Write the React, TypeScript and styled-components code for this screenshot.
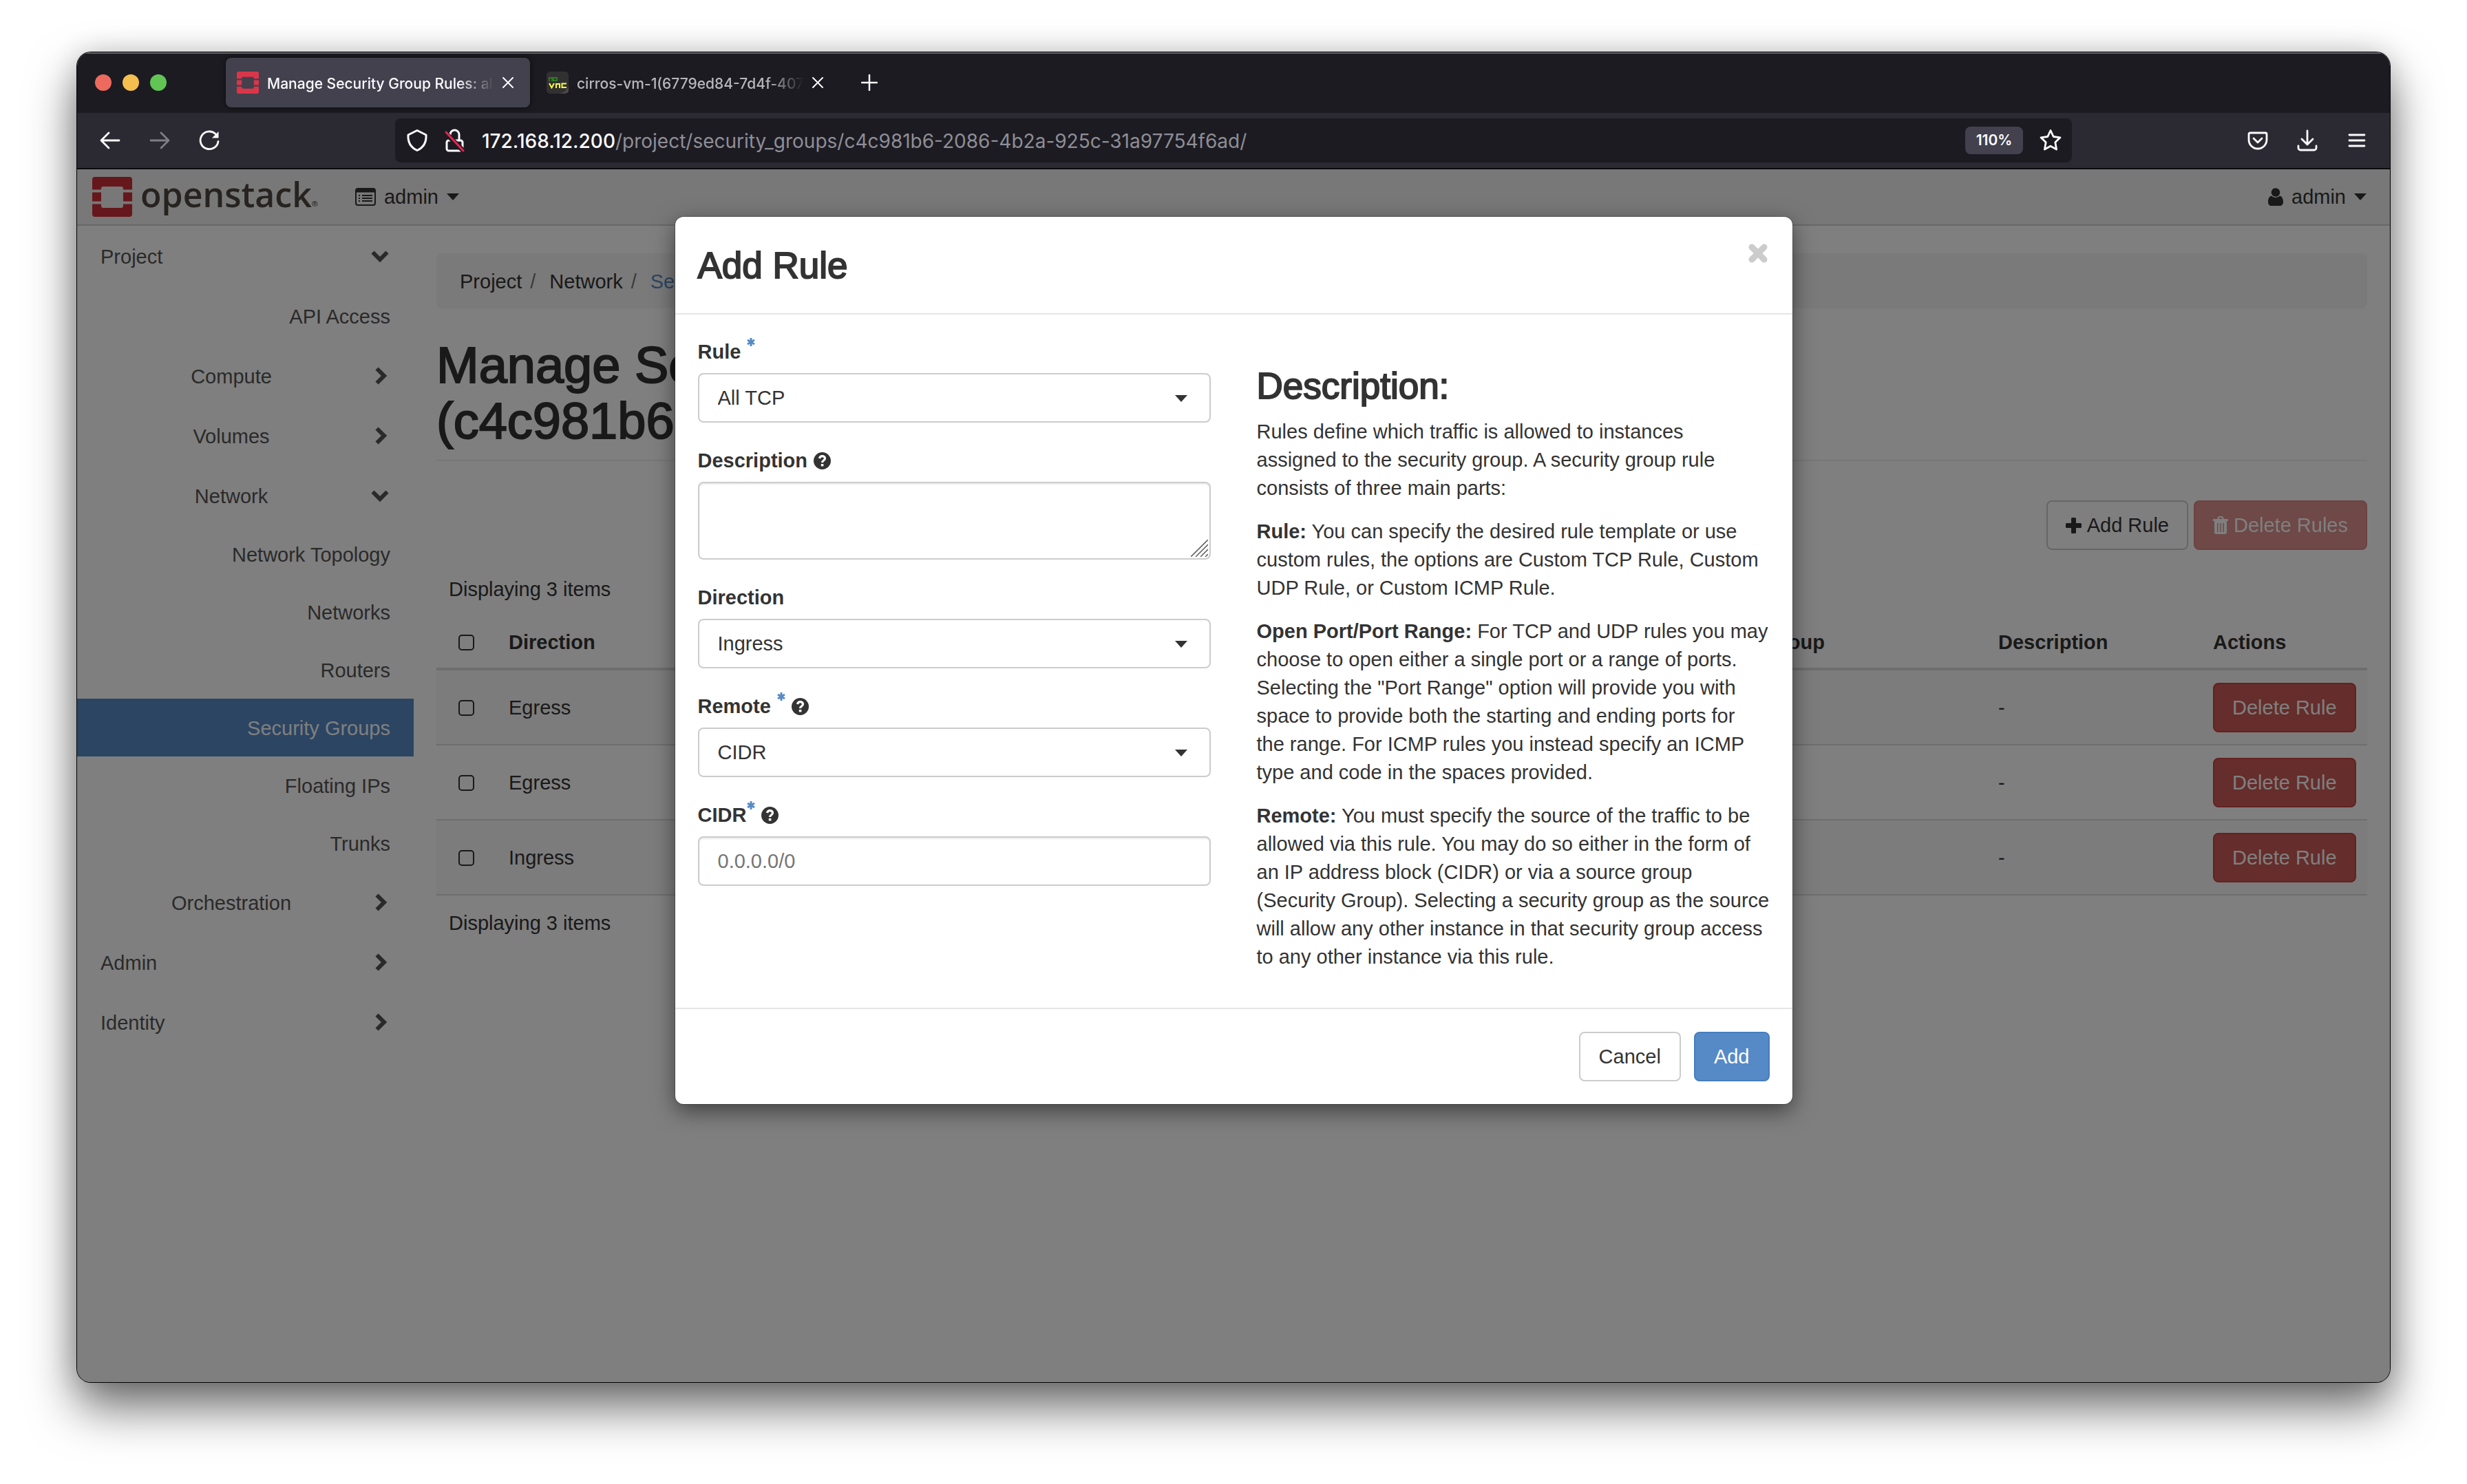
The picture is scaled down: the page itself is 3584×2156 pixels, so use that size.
import React from 'react';
import styled, { createGlobalStyle } from 'styled-components';

const sans = '"Liberation Sans", Arial, sans-serif';
const chromeFont = 'Inter, Roboto, sans-serif';

const GlobalStyle = createGlobalStyle`
  *, *::before, *::after { box-sizing: border-box; }
  body { margin: 0; background: #fff; }
  button, input, select, textarea { font: inherit; color: inherit; margin: 0; }
  button { cursor: pointer; }
  a { text-decoration: none; color: inherit; }
  svg { display: block; flex: none; }
`;

/* ---------- desktop and browser window ---------- */

const Desktop = styled.div`
  min-height: 100vh;
  padding: 76px 112px 148px;
  display: flex;
  flex-direction: column;
  font: 29px/41px ${sans};
  color: #333;
`;

const Window = styled.div`
  flex: 1;
  display: flex;
  flex-direction: column;
  border-radius: 20px;
  overflow: hidden;
  background: #fff;
  box-shadow: 0 0 0 1px #000, 0 36px 70px rgba(0, 0, 0, 0.58), 0 0 40px rgba(0, 0, 0, 0.16);
`;

const TabStrip = styled.div`
  display: flex;
  align-items: center;
  height: 88px;
  padding-left: 26px;
  background: #1c1b22;
  box-shadow: inset 0 2px 0 #66666a;
`;

const Lights = styled.div`
  display: flex;
  gap: 16px;
  width: 190px;
`;

const Light = styled.span<{ $color: string }>`
  width: 24px;
  height: 24px;
  border-radius: 50%;
  background: ${(p) => p.$color};
`;

const Tab = styled.div<{ $active?: boolean }>`
  display: flex;
  align-items: center;
  width: 442px;
  height: 72px;
  margin-right: 8px;
  padding: 0 24px 0 16px;
  gap: 12px;
  border-radius: 8px;
  font: 500 21px/28px ${chromeFont};
  color: ${(p) => (p.$active ? '#fbfbfe' : '#b8b8bc')};
  background: ${(p) => (p.$active ? '#42414d' : 'transparent')};
  box-shadow: ${(p) => (p.$active ? '0 0 8px rgba(0, 0, 0, 0.6)' : 'none')};
`;

const TabTitle = styled.span`
  flex: 1;
  min-width: 0;
  padding-top: 3px;
  overflow: hidden;
  white-space: nowrap;
  mask-image: linear-gradient(to right, #000 84%, transparent 100%);
`;

const ChromeButton = styled.button<{ $dim?: boolean }>`
  display: flex;
  align-items: center;
  justify-content: center;
  padding: 0;
  border: 0;
  background: none;
  color: #fbfbfe;
  opacity: ${(p) => (p.$dim ? 0.4 : 1)};
`;

const NewTab = styled(ChromeButton)`
  margin-left: 11px;
  width: 48px;
  height: 48px;
`;

const Toolbar = styled.div`
  display: flex;
  align-items: center;
  height: 82px;
  padding: 0 32px;
  background: #2b2a33;
  border-bottom: 2px solid #0c0c0d;
`;

const NavButtons = styled.div`
  display: flex;
  gap: 40px;
  width: 430px;
`;

const UrlBar = styled.div`
  flex: 1;
  display: flex;
  align-items: center;
  height: 64px;
  padding: 0 14px 0 16px;
  gap: 23px;
  border-radius: 8px;
  background: #1c1b22;
`;

const Url = styled.div`
  flex: 1;
  padding-top: 2px;
  font: 400 28px/40px ${chromeFont};
  color: #8f8e96;
  b { font-weight: 500; color: #fbfbfe; }
`;

const ZoomPill = styled.button`
  width: 84px;
  height: 40px;
  padding: 0;
  border: 0;
  border-radius: 8px;
  background: #42414d;
  font: 600 21px/40px ${chromeFont};
  color: #fbfbfe;
`;

const ToolIcons = styled.div`
  display: flex;
  justify-content: flex-end;
  gap: 40px;
  width: 430px;
`;

/* ---------- dashboard page ---------- */

const Page = styled.div`
  position: relative;
  flex: 1;
  display: flex;
  flex-direction: column;
`;

const TopBar = styled.header`
  display: flex;
  align-items: center;
  height: 82px;
  padding: 0 34px 0 22px;
  background: #f0f0f0;
  border-bottom: 2px solid #d0d0d0;
`;

const Brand = styled.a`
  display: flex;
  align-items: center;
  gap: 12px;
  margin-right: 54px;
`;

const Wordmark = styled.span`
  display: flex;
  align-items: flex-end;
  padding-bottom: 8px;
  font: 600 50px/56px "Open Sans", "Noto Sans", sans-serif;
  color: #4e4640;
  small { font-size: 11px; line-height: 28px; }
`;

const Menu = styled.button`
  display: flex;
  align-items: center;
  gap: 12px;
  padding: 0;
  border: 0;
  background: none;
`;

const Spacer = styled.div`
  flex: 1;
`;

const Body = styled.div`
  flex: 1;
  display: flex;
`;

const Sidebar = styled.nav`
  width: 489px;
  color: #555;
`;

const NavGroup = styled.button<{ $nested?: boolean }>`
  display: flex;
  align-items: center;
  gap: 13px;
  width: 100%;
  height: 87px;
  padding: 0 36px 0 34px;
  border: 0;
  background: none;
  span { flex: 1; padding-top: 3px; text-align: ${(p) => (p.$nested ? 'center' : 'left')}; }
`;

const NavLeaf = styled.a<{ $active?: boolean; $tall?: boolean }>`
  display: flex;
  align-items: center;
  justify-content: flex-end;
  height: ${(p) => (p.$tall ? 87 : 84)}px;
  padding: 3px 34px 0;
  color: ${(p) => (p.$active ? '#fff' : 'inherit')};
  background: ${(p) => (p.$active ? '#568ac6' : 'transparent')};
`;

const Main = styled.main`
  flex: 1;
  min-width: 0;
  padding: 40px 33px;
`;

const Breadcrumb = styled.ol`
  display: flex;
  align-items: center;
  height: 80px;
  margin: 0;
  padding: 3px 34px 0;
  list-style: none;
  border-radius: 8px;
  background: #f5f5f5;
  li + li::before { content: "/"; padding: 0 20px 0 12px; color: #777; }
  a { color: #568ac6; }
`;

const PageTitle = styled.h1`
  margin: 0;
  padding: 42px 0 16px;
  font-size: 74px;
  line-height: 81px;
  font-weight: 400;
  -webkit-text-stroke: 2px currentColor;
  border-bottom: 2px solid #eee;
`;

const Actions = styled.div`
  display: flex;
  justify-content: flex-end;
  gap: 8px;
  padding: 57px 0 37px;
`;

const Button = styled.button<{ $kind?: 'primary' | 'danger' }>`
  display: inline-flex;
  align-items: center;
  justify-content: center;
  gap: 8px;
  height: 72px;
  padding: 0 26px;
  border: 2px solid ${(p) => (p.$kind === 'primary' ? '#467ebf' : p.$kind === 'danger' ? '#c64440' : '#ccc')};
  border-radius: 8px;
  white-space: nowrap;
  color: ${(p) => (p.$kind ? '#fff' : '#333')};
  background: ${(p) => (p.$kind === 'primary' ? '#568ac6' : p.$kind === 'danger' ? '#ca5a56' : '#fff')};
  &:disabled { opacity: 0.65; }
`;

const Count = styled.p`
  margin: 0;
  padding: 0 18px;
`;

const Rules = styled.table`
  width: 100%;
  margin: 20px 0;
  border-collapse: separate;
  border-spacing: 0;
  table-layout: fixed;
  th { height: 77px; padding: 0 18px; text-align: left; border-bottom: 4px solid #ddd; white-space: nowrap; }
  td { padding: 18px 18px 17px; border-bottom: 2px solid #ddd; white-space: nowrap; }
  tbody tr:nth-child(odd) { background: #f9f9f9; }
`;

const Col = styled.col<{ $width?: number }>`
  width: ${(p) => (p.$width ? `${p.$width}px` : 'auto')};
`;

const Check = styled.input`
  appearance: none;
  display: block;
  width: 23px;
  height: 23px;
  margin: 0 0 0 14px;
  border: 2px solid #333;
  border-radius: 5px;
`;

/* ---------- modal ---------- */

const Backdrop = styled.div`
  position: absolute;
  inset: 0;
  display: flex;
  justify-content: center;
  align-items: flex-start;
  padding-top: 69px;
  background: rgba(0, 0, 0, 0.5);
`;

const Dialog = styled.section`
  width: 1623px;
  border-radius: 12px;
  background: #fff;
  box-shadow: 0 10px 32px rgba(0, 0, 0, 0.5), 0 0 0 1px rgba(0, 0, 0, 0.2);
`;

const DialogHeader = styled.header`
  display: flex;
  justify-content: space-between;
  align-items: center;
  height: 142px;
  padding: 0 35px 0 33px;
  border-bottom: 2px solid #e5e5e5;
`;

const Heading = styled.h3`
  margin: 0;
  font-size: 53px;
  line-height: 57px;
  font-weight: 400;
  -webkit-text-stroke: 2px currentColor;
`;

const Close = styled.button`
  align-self: flex-start;
  margin-top: 38px;
  padding: 0;
  border: 0;
  background: none;
`;

const DialogBody = styled.div`
  display: grid;
  grid-template-columns: 1fr 1fr;
  gap: 67px;
  padding: 34px 33px 31px;
`;

const Field = styled.div`
  margin-bottom: 35px;
`;

const Label = styled.label`
  display: flex;
  gap: 9px;
  margin-bottom: 10px;
  font-weight: 700;
  svg { align-self: center; }
`;

const Star = styled.span`
  display: flex;
  align-items: flex-start;
  gap: 1px;
  svg { align-self: flex-start; }
`;

const Control = styled.div`
  position: relative;
  display: flex;
`;

const Corner = styled.span<{ $right: number; $bottom: number }>`
  position: absolute;
  right: ${(p) => p.$right}px;
  bottom: ${(p) => p.$bottom}px;
  pointer-events: none;
`;

const Select = styled.select`
  appearance: none;
  width: 100%;
  height: 72px;
  padding: 0 27px;
  border: 2px solid #ccc;
  border-radius: 8px;
  background: #fff;
`;

const TextInput = styled.input`
  width: 100%;
  height: 72px;
  padding: 0 27px;
  border: 2px solid #ccc;
  border-radius: 8px;
  background: #fff;
  box-shadow: inset 0 2px 2px rgba(0, 0, 0, 0.08);
  &::placeholder { color: #757575; opacity: 1; }
`;

const TextArea = styled.textarea`
  width: 100%;
  height: 113px;
  padding: 12px 27px;
  border: 2px solid #ccc;
  border-radius: 8px;
  resize: none;
  background: #fff;
  box-shadow: inset 0 2px 2px rgba(0, 0, 0, 0.08);
`;

const Help = styled.div`
  padding-top: 41px;
  p { margin: 0 0 22px; }
  ${Heading} { margin-bottom: 18px; }
`;

const DialogFooter = styled.footer`
  display: flex;
  justify-content: flex-end;
  gap: 19px;
  padding: 33px;
  border-top: 2px solid #e5e5e5;
  ${Button} { padding: 0 27px; }
`;

/* ---------- icons ---------- */

const StackMark = ({ size, color }: { size: number; color: string }) => (
  <svg width={size} height={size} viewBox="0 0 58 58" fill={color}>
    <path d="M4 0h50a4 4 0 0 1 4 4v14.500H45V17a3 3 0 0 0-3-3H16a3 3 0 0 0-3 3v1.500H0V4a4 4 0 0 1 4-4Z" />
    <path d="M0 22.500h13v13H0zM45 22.500h13v13H45z" />
    <path d="M0 39.500h13V42a3 3 0 0 0 3 3h26a3 3 0 0 0 3-3v-2.500h13V54a4 4 0 0 1-4 4H4a4 4 0 0 1-4-4Z" />
  </svg>
);

const VncMark = () => (
  <svg width="32" height="32" viewBox="0 0 32 32">
    <rect width="32" height="32" rx="5" fill="#313131" />
    <path d="M32 21v6a5 5 0 0 1-5 5H17c8-1 13-5 15-11Z" fill="#4a4a4a" />
    <path d="M4 14V9h4v5M10 9h5v4h-5z" fill="none" stroke="#2c7a1c" strokeWidth="2" />
    <path d="M4 17l3.500 6.500L11 17M14 24v-6h5v6M29 17.500h-6.500v5.500H29" fill="none" stroke="#ffff3c" strokeWidth="2" />
  </svg>
);

const Cross = () => (
  <svg width="16" height="16" viewBox="0 0 16 16" stroke="currentColor" strokeWidth="2" strokeLinecap="round">
    <path d="M1 1l14 14M15 1L1 15" />
  </svg>
);

const Plus = () => (
  <svg width="24" height="24" viewBox="0 0 24 24" stroke="currentColor" strokeWidth="2.500" strokeLinecap="round">
    <path d="M12 1v22M1 12h22" />
  </svg>
);

const Arrow = ({ back }: { back?: boolean }) => (
  <svg width="32" height="32" viewBox="0 0 32 32" fill="none" stroke="currentColor" strokeWidth="2.800" strokeLinecap="round" strokeLinejoin="round">
    {back ? <path d="M29 16H3M14 5L3 16l11 11" /> : <path d="M3 16h26M18 5l11 11-11 11" />}
  </svg>
);

const Reload = () => (
  <svg width="32" height="32" viewBox="0 0 32 32" fill="none" stroke="currentColor" strokeWidth="2.800" strokeLinecap="round">
    <path d="M29 17.500A13 12.800 0 1 1 25 6.500" />
    <path d="M29.500 3v9.500H20Z" fill="currentColor" stroke="none" />
  </svg>
);

const Shield = () => (
  <svg width="32" height="34" viewBox="0 0 32 34" fill="none" stroke="#fbfbfe" strokeWidth="3" strokeLinejoin="round">
    <path d="M16 2.500l13 6.500c.6 10-3 18-13 22.500C6 27 2.400 19 3 9Z" />
  </svg>
);

const BrokenLock = () => (
  <svg width="32" height="34" viewBox="0 0 32 34" fill="none" stroke="#fbfbfe" strokeWidth="3">
    <rect x="4" y="17" width="23" height="15" rx="3" />
    <path d="M9 9a6.500 6.500 0 0 1 13-1v9" strokeLinecap="round" />
    <path d="M2 6l26 26" stroke="#1c1b22" strokeWidth="7" />
    <path d="M3 5l25 27" stroke="#e22850" strokeLinecap="round" />
  </svg>
);

const StarIcon = () => (
  <svg width="34" height="34" viewBox="0 0 34 34" fill="none" stroke="currentColor" strokeWidth="2.800" strokeLinejoin="round">
    <path d="M17 2.500l4.200 9 9.800 1.300-7.200 6.900 1.800 10.300-8.600-4.800-8.600 4.800 1.800-10.300L3 12.800l9.800-1.300Z" />
  </svg>
);

const Pocket = () => (
  <svg width="32" height="32" viewBox="0 0 32 32" fill="none" stroke="currentColor" strokeWidth="2.800" strokeLinecap="round" strokeLinejoin="round">
    <path d="M5 5h22a2 2 0 0 1 2 2v8a13 13 0 0 1-26 0V7a2 2 0 0 1 2-2Z" />
    <path d="M10 13l6 6 6-6" />
  </svg>
);

const Download = () => (
  <svg width="32" height="32" viewBox="0 0 32 32" fill="none" stroke="currentColor" strokeWidth="2.800" strokeLinecap="round" strokeLinejoin="round">
    <path d="M16 2v20M8 14l8 8 8-8M3 24v3a3 3 0 0 0 3 3h20a3 3 0 0 0 3-3v-3" />
  </svg>
);

const Burger = () => (
  <svg width="32" height="32" viewBox="0 0 32 32" stroke="currentColor" strokeWidth="2.800" strokeLinecap="round">
    <path d="M5 8h22M5 16h22M5 24h22" />
  </svg>
);

const Caret = () => (
  <svg width="18" height="10" viewBox="0 0 18 10" fill="currentColor">
    <path d="M0 0h18L9 10Z" />
  </svg>
);

const ListIcon = () => (
  <svg width="30" height="26" viewBox="0 0 30 26" fill="none" stroke="currentColor" strokeWidth="2">
    <rect x="1" y="1" width="28" height="24" rx="3" />
    <path d="M2 4h26" strokeWidth="5" />
    <path d="M5 11h2M5 15h2M5 19h2M10 11h15M10 15h15M10 19h15" />
  </svg>
);

const UserIcon = () => (
  <svg width="22" height="26" viewBox="0 0 22 26" fill="currentColor">
    <circle cx="11" cy="6.500" r="6.300" />
    <path d="M5 11.500c3.500 3.300 8.500 3.300 12 0 3.500.8 5 4.500 5 9 0 3.500-2 5.500-5 5.500H5c-3 0-5-2-5-5.500 0-4.500 1.500-8.200 5-9Z" />
  </svg>
);

const Chevron = ({ open }: { open?: boolean }) => (
  <svg width="26" height="26" viewBox="0 0 26 26" fill="none" stroke="currentColor" strokeWidth="6">
    {open ? <path d="M2.500 7.500L13 18 23.500 7.500" /> : <path d="M8.500 2.500L19 13 8.500 23.500" />}
  </svg>
);

const BoldPlus = () => (
  <svg width="23" height="23" viewBox="0 0 23 23" fill="currentColor">
    <path d="M9.500 0h4A1.500 1.500 0 0 1 15 1.500V8h6.500A1.500 1.500 0 0 1 23 9.500v4a1.500 1.500 0 0 1-1.500 1.500H15v6.500a1.500 1.500 0 0 1-1.500 1.500h-4A1.500 1.500 0 0 1 8 21.500V15H1.500A1.500 1.500 0 0 1 0 13.500v-4A1.500 1.500 0 0 1 1.500 8H8V1.500A1.500 1.500 0 0 1 9.500 0Z" />
  </svg>
);

const Trash = () => (
  <svg width="22" height="26" viewBox="0 0 22 26" fill="currentColor" fillRule="evenodd">
    <path d="M0 4h6l1.500-3a2 2 0 0 1 1.500-1h4a2 2 0 0 1 1.500 1L16 4h6v3H0ZM8.500 4h5l-1-2h-3Z" />
    <path d="M2 7h18v16a3 3 0 0 1-3 3H5a3 3 0 0 1-3-3ZM6 10v13h1.500V10ZM10.200 10v13h1.500V10ZM14.500 10v13H16V10Z" />
  </svg>
);

const Asterisk = () => (
  <svg width="12" height="12" viewBox="0 0 12 12" stroke="#568ac6" strokeWidth="3">
    <path d="M6 0v12M1 3l10 6M11 3L1 9" />
  </svg>
);

const HelpIcon = () => (
  <svg width="25" height="25" viewBox="0 0 25 25" fill="none">
    <circle cx="12.500" cy="12.500" r="12.500" fill="#333" />
    <path d="M8.500 9c.6-2.400 2.200-3.300 4-3.300 2.300 0 4 1.300 4 3.300 0 3-4 2.900-4 6" stroke="#fff" strokeWidth="3.200" />
    <path d="M10.800 17h3.600v3.400h-3.600z" fill="#fff" />
  </svg>
);

const BigCross = () => (
  <svg width="30" height="30" viewBox="0 0 30 30" stroke="#ccc" strokeWidth="9" strokeLinecap="round">
    <path d="M6 6l18 18M24 6L6 24" />
  </svg>
);

const Grip = () => (
  <svg width="25" height="25" viewBox="0 0 25 25" stroke="#666" strokeWidth="1.600">
    <path d="M0 25L25 0M7 25L25 7M14 25L25 14M21 25l4-4" />
  </svg>
);

/* ---------- content ---------- */

const networkLinks = ['Network Topology', 'Networks', 'Routers', 'Security Groups', 'Floating IPs', 'Trunks'];

const rules = ['Egress', 'Egress', 'Ingress'];

const SelectField = ({ id, label, value, required, help }: {
  id: string; label: string; value: string; required?: boolean; help?: boolean;
}) => (
  <Field>
    <Label htmlFor={id}>
      {label}
      {required && <Star><Asterisk /></Star>}
      {help && <HelpIcon />}
    </Label>
    <Control>
      <Select id={id} defaultValue={value}>
        <option>{value}</option>
      </Select>
      <Corner $right={34} $bottom={30}><Caret /></Corner>
    </Control>
  </Field>
);

const BrowserChrome = () => (
  <>
    <TabStrip>
      <Lights>
        <Light $color="#ec6a5e" />
        <Light $color="#f5bf4f" />
        <Light $color="#61c554" />
      </Lights>
      <Tab $active>
        <StackMark size={32} color="#da3649" />
        <TabTitle>Manage Security Group Rules: al</TabTitle>
        <ChromeButton aria-label="Close tab"><Cross /></ChromeButton>
      </Tab>
      <Tab>
        <VncMark />
        <TabTitle>cirros-vm-1(6779ed84-7d4f-407</TabTitle>
        <ChromeButton aria-label="Close tab"><Cross /></ChromeButton>
      </Tab>
      <NewTab aria-label="New tab"><Plus /></NewTab>
    </TabStrip>
    <Toolbar>
      <NavButtons>
        <ChromeButton aria-label="Back"><Arrow back /></ChromeButton>
        <ChromeButton aria-label="Forward" $dim><Arrow /></ChromeButton>
        <ChromeButton aria-label="Reload"><Reload /></ChromeButton>
      </NavButtons>
      <UrlBar>
        <Shield />
        <BrokenLock />
        <Url><b>172.168.12.200</b>/project/security_groups/c4c981b6-2086-4b2a-925c-31a97754f6ad/</Url>
        <ZoomPill>110%</ZoomPill>
        <ChromeButton aria-label="Bookmark"><StarIcon /></ChromeButton>
      </UrlBar>
      <ToolIcons>
        <ChromeButton aria-label="Save to Pocket"><Pocket /></ChromeButton>
        <ChromeButton aria-label="Downloads"><Download /></ChromeButton>
        <ChromeButton aria-label="Menu"><Burger /></ChromeButton>
      </ToolIcons>
    </Toolbar>
  </>
);

const AddRuleDialog = () => (
  <Dialog role="dialog" aria-labelledby="dialog-title">
    <DialogHeader>
      <Heading id="dialog-title">Add Rule</Heading>
      <Close aria-label="Close"><BigCross /></Close>
    </DialogHeader>
    <DialogBody>
      <form>
        <SelectField id="rule" label="Rule" value="All TCP" required />
        <Field>
          <Label htmlFor="description">Description<HelpIcon /></Label>
          <Control>
            <TextArea id="description" />
            <Corner $right={4} $bottom={4}><Grip /></Corner>
          </Control>
        </Field>
        <SelectField id="direction" label="Direction" value="Ingress" />
        <SelectField id="remote" label="Remote" value="CIDR" required help />
        <Field>
          <Label htmlFor="cidr"><Star>CIDR<Asterisk /></Star><HelpIcon /></Label>
          <TextInput id="cidr" placeholder="0.0.0.0/0" />
        </Field>
      </form>
      <Help>
        <Heading>Description:</Heading>
        <p>Rules define which traffic is allowed to instances<br />assigned to the security group. A security group rule consists of three main parts:</p>
        <p><b>Rule:</b> You can specify the desired rule template or use custom rules, the options are Custom TCP Rule, Custom UDP Rule, or Custom ICMP Rule.</p>
        <p><b>Open Port/Port Range:</b> For TCP and UDP rules you may choose to open either a single port or a range of ports. Selecting the "Port Range" option will provide you with space to provide both the starting and ending ports for<br />the range. For ICMP rules you instead specify an ICMP type and code in the spaces provided.</p>
        <p><b>Remote:</b> You must specify the source of the traffic to be allowed via this rule. You may do so either in the form of an IP address block (CIDR) or via a source group (Security Group). Selecting a security group as the source will allow any other instance in that security group access to any other instance via this rule.</p>
      </Help>
    </DialogBody>
    <DialogFooter>
      <Button>Cancel</Button>
      <Button $kind="primary">Add</Button>
    </DialogFooter>
  </Dialog>
);

export default function App() {
  return (
    <>
      <GlobalStyle />
      <Desktop>
        <Window>
          <BrowserChrome />
          <Page>
            <TopBar>
              <Brand href="#">
                <StackMark size={58} color="#cc2e36" />
                <Wordmark>openstack<small>®</small></Wordmark>
              </Brand>
              <Menu><ListIcon />admin<Caret /></Menu>
              <Spacer />
              <Menu><UserIcon />admin<Caret /></Menu>
            </TopBar>
            <Body>
              <Sidebar>
                <NavGroup><span>Project</span><Chevron open /></NavGroup>
                <NavLeaf href="#" $tall>API Access</NavLeaf>
                <NavGroup $nested><span>Compute</span><Chevron /></NavGroup>
                <NavGroup $nested><span>Volumes</span><Chevron /></NavGroup>
                <NavGroup $nested><span>Network</span><Chevron open /></NavGroup>
                {networkLinks.map((name) => (
                  <NavLeaf key={name} href="#" $active={name === 'Security Groups'}>{name}</NavLeaf>
                ))}
                <NavGroup $nested><span>Orchestration</span><Chevron /></NavGroup>
                <NavGroup><span>Admin</span><Chevron /></NavGroup>
                <NavGroup><span>Identity</span><Chevron /></NavGroup>
              </Sidebar>
              <Main>
                <Breadcrumb>
                  <li>Project</li>
                  <li>Network</li>
                  <li><a href="#">Security Groups</a></li>
                </Breadcrumb>
                <PageTitle>Manage Security Group Rules:<br />(c4c981b6-2086-4b2a-925c-31a97754f6ad)</PageTitle>
                <Actions>
                  <Button><BoldPlus />Add Rule</Button>
                  <Button $kind="danger" disabled><Trash />Delete Rules</Button>
                </Actions>
                <Count>Displaying 3 items</Count>
                <Rules>
                  <colgroup>
                    <Col $width={87} />
                    <Col />
                    <Col $width={576} />
                    <Col $width={312} />
                    <Col $width={242} />
                  </colgroup>
                  <thead>
                    <tr>
                      <th><Check type="checkbox" aria-label="Select all" /></th>
                      <th>Direction</th>
                      <th>Remote Security Group</th>
                      <th>Description</th>
                      <th>Actions</th>
                    </tr>
                  </thead>
                  <tbody>
                    {rules.map((direction, i) => (
                      <tr key={i}>
                        <td><Check type="checkbox" aria-label={`Select rule ${i + 1}`} /></td>
                        <td>{direction}</td>
                        <td />
                        <td>-</td>
                        <td><Button $kind="danger">Delete Rule</Button></td>
                      </tr>
                    ))}
                  </tbody>
                </Rules>
                <Count>Displaying 3 items</Count>
              </Main>
            </Body>
            <Backdrop>
              <AddRuleDialog />
            </Backdrop>
          </Page>
        </Window>
      </Desktop>
    </>
  );
}
